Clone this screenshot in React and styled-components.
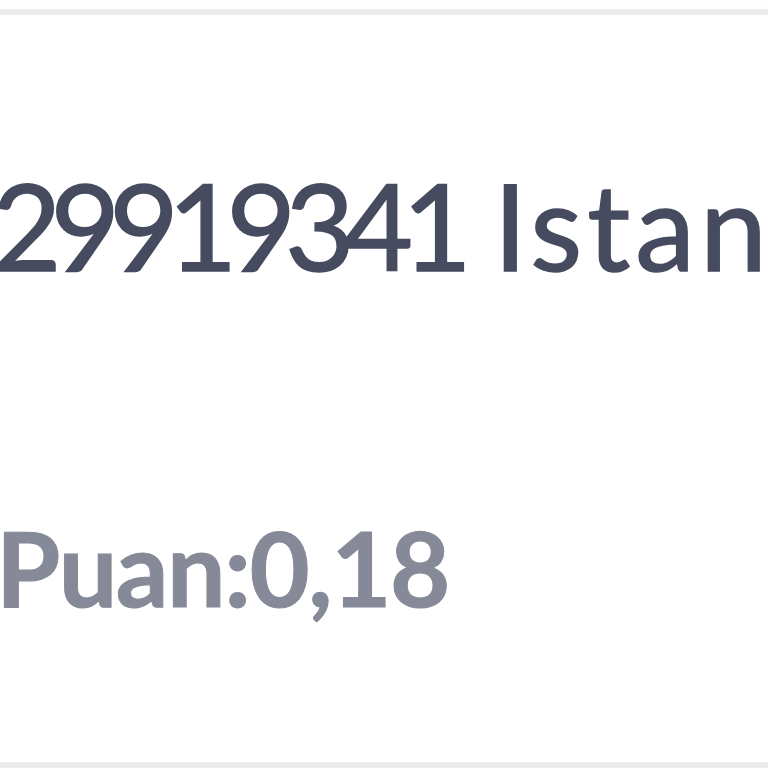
import React from "react";
import styled, { createGlobalStyle } from "styled-components";

const Global = createGlobalStyle`
  html, body { margin: 0; padding: 0; background: #fdfdfd; }
  body { font-family: "Lato", "Inter", sans-serif; }
`;

const Page = styled.div`
  width: 768px;
  height: 768px;
  overflow: hidden;
  padding-top: 9px;
  box-sizing: border-box;
`;

const Card = styled.div`
  background: #ffffff;
  border-top: 6px solid #ebebeb;
  border-bottom: 6px solid #ebebeb;
  height: 759px;
  box-sizing: border-box;
  overflow: hidden;
  display: flex;
  flex-direction: column;
`;

const Address = styled.div`
  margin-top: 140px;
  margin-left: -8px;
  white-space: nowrap;
  font-size: 120px;
  line-height: 140px;
  color: #464b5f;
  font-weight: 400;
  -webkit-text-stroke: 1.5px #464b5f;
`;

const Part = styled.span`
  letter-spacing: ${(p) => p.$track}px;
  margin-left: ${(p) => p.$gap || 0}px;
`;

const Score = styled.div`
  margin-top: 212px;
  margin-left: -4px;
  white-space: nowrap;
  font-size: 104px;
  line-height: 120px;
  letter-spacing: -1.5px;
  font-weight: 700;
  color: #868a98;
  -webkit-text-stroke: 1px #868a98;
`;

export default function App() {
  return (
    <>
      <Global />
      <Page>
        <Card>
          <Address>
            <Part $track={-11}>29919341</Part>{" "}
            <Part $track={5} $gap={2}>Istanbul</Part>
          </Address>
          <Score>Puan:0,18</Score>
        </Card>
      </Page>
    </>
  );
}
